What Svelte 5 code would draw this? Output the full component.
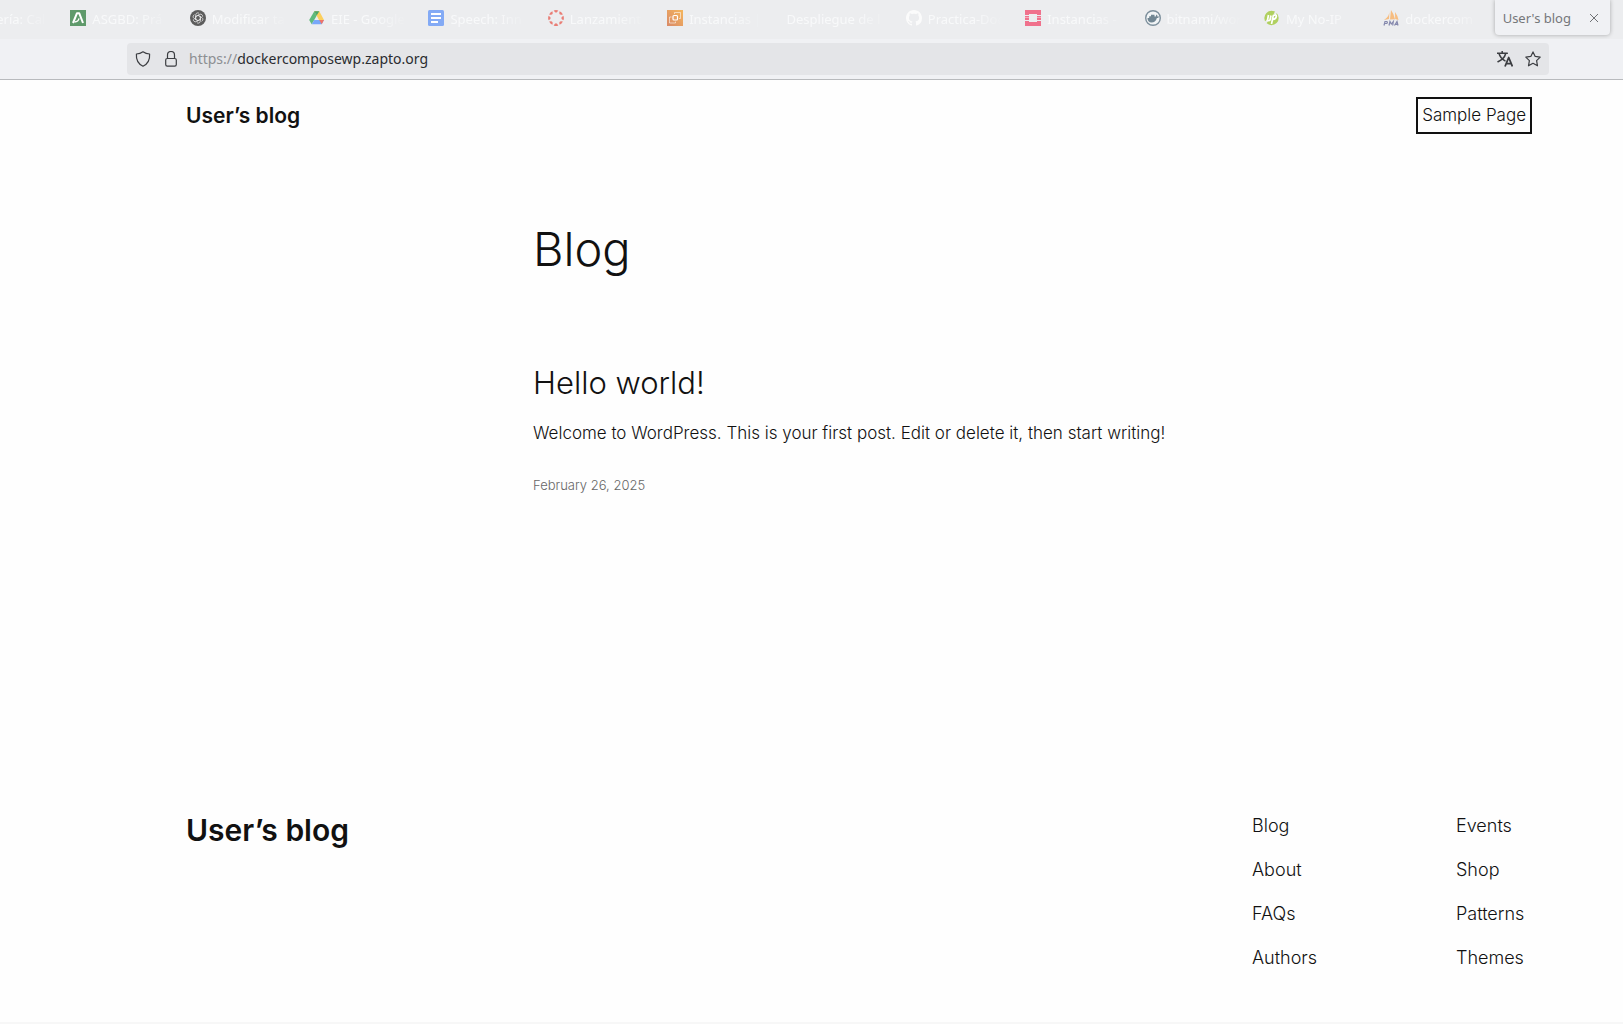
<script lang="ts">
  const tabs = [
    { icon: '', title: 'Librería: Cal' },
    { icon: 'andalucia', title: 'ASGBD: Prá' },
    { icon: 'gpt', title: 'Modificar ta' },
    { icon: 'drive', title: 'EIE - Google' },
    { icon: 'docs', title: 'Speech: Inn' },
    { icon: 'canvas', title: 'Lanzamient' },
    { icon: 'ec2', title: 'Instancias |' },
    { icon: 'none', title: 'Despliegue de l' },
    { icon: 'github', title: 'Practica-Doc' },
    { icon: 'openstack', title: 'Instancias -' },
    { icon: 'docker', title: 'bitnami/wor' },
    { icon: 'noip', title: 'My No-IP' },
    { icon: 'pma', title: 'dockercom' },
  ];

  const footerLinks = ['Blog', 'Events', 'About', 'Shop', 'FAQs', 'Patterns', 'Authors', 'Themes'];
  const ring = Array.from({ length: 8 }, (_, i) => i * 45);
  let address = $state('dockercomposewp.zapto.org');
</script>

<div class="window">
  <div class="tabstrip" role="tablist" aria-label="Tabs">
    {#each tabs as tab}
      <button class="tab" role="tab" aria-selected="false">
        {#if tab.icon !== 'none'}
          <svg class="favicon" viewBox="0 0 16 16" aria-hidden="true">
            {#if tab.icon === 'andalucia'}
              <rect width="16" height="16" fill="#5f9a6b" />
              <path d="M3 13 7 3.2h2.2L13 13" fill="none" stroke="#fff" stroke-width="2" stroke-linejoin="round" />
              <path d="M4.500 12C7 11.800 8.600 10.500 9 8.300" fill="none" stroke="#fff" stroke-width="1.300" />
            {:else if tab.icon === 'gpt'}
              <circle cx="8" cy="8" r="8" fill="#5d5d5d" />
              <g fill="none" stroke="#e4e4e4" stroke-width="0.8">
                {#each [0, 60, 120, 180, 240, 300] as angle}
                  <path d="M5.700 7V4.800a2.100 2.100 0 0 1 3.400-1.500M5.700 6.600 8 5.300l2.800 1.600" transform="rotate({angle} 8 8)" />
                {/each}
              </g>
            {:else if tab.icon === 'drive'}
              <path d="M5.300 1.200h5L5.200 10 2.700 14.200 0.200 10z" fill="#5fba7d" />
              <path d="M5.300 1.200h5L15 10h-5z" fill="#fccf5c" />
              <path d="M5.300 1.200h5L7.700 5.400z" fill="#4ba56b" />
              <path d="M5.200 10H15l-2.300 4.200h-10z" fill="#78a7f8" />
              <path d="M10.200 10H15l-2.300 4.200z" fill="#ef7468" />
            {:else if tab.icon === 'docs'}
              <rect width="16" height="16" rx="1.500" fill="#83aaf5" />
              <path d="M3 4h10M3 8h10M3 12h7" stroke="#fff" stroke-width="2" />
            {:else if tab.icon === 'canvas'}
              {#each ring as angle}
                <path d="M5.700 .6Q8-.4 10.300 .6 8 4.800 5.700 .6z" fill="#e97e76" transform="rotate({angle} 8 8)" />
              {/each}
            {:else if tab.icon === 'ec2'}
              <defs>
                <linearGradient id="orange" x1="0" y1="1" x2="1" y2="0">
                  <stop offset="0" stop-color="#d98a68" />
                  <stop offset="1" stop-color="#f5b65c" />
                </linearGradient>
              </defs>
              <rect width="16" height="16" fill="url(#orange)" />
              <g fill="none" stroke="#fff">
                <rect x="6" y="5.500" width="4.500" height="4.500" rx="1" stroke-width="1.200" />
                <path d="M7.500 4V2.500h6v6H12M4.500 7h-2v6h6v-1.500" stroke-width="0.800" opacity="0.700" />
              </g>
            {:else if tab.icon === 'github'}
              <path fill="#fbfbfb" d="M8 0C3.580 0 0 3.580 0 8c0 3.540 2.290 6.530 5.470 7.590.4.070.55-.17.55-.38 0-.19-.01-.82-.01-1.490-2.010.37-2.530-.49-2.690-.94-.09-.23-.48-.94-.82-1.130-.28-.15-.68-.52-.01-.53.63-.01 1.080.58 1.230.82.72 1.210 1.870.87 2.330.66.07-.52.28-.87.51-1.070-1.780-.2-3.640-.89-3.640-3.950 0-.87.31-1.590.82-2.150-.08-.2-.36-1.020.08-2.120 0 0 .67-.21 2.200.82.64-.18 1.320-.27 2-.27s1.360.09 2 .27c1.530-1.040 2.200-.82 2.200-.82.44 1.100.16 1.920.08 2.120.51.56.82 1.270.82 2.150 0 3.070-1.870 3.750-3.650 3.950.29.25.54.73.54 1.480 0 1.070-.01 1.930-.01 2.200 0 .21.15.46.55.38A8.010 8.010 0 0 0 16 8c0-4.420-3.580-8-8-8z" />
            {:else if tab.icon === 'openstack'}
              <path d="M0 0h16v5h-4V4H4v1H0zM0 6h4v4H0zM12 6h4v4h-4zM0 11h4v1h8v-1h4v5H0z" fill="#f0718c" />
              <path d="M0 7.500h4M12 7.500h4" stroke="#f6aabb" />
            {:else if tab.icon === 'docker'}
              <circle cx="8" cy="8" r="7.300" fill="#f1f4f6" stroke="#7c8f9c" stroke-width="1.400" />
              <path d="M2.500 8h1.700V6.300H6V4.800h3.500v1.700h1.300c.1-.8.400-1.400.900-1.900.600.500.800 1.200.700 1.900.500-.2 1.200-.1 1.700.2-.4.900-1.200 1.200-2.200 1.200C11 11 9 12.500 6.500 12.500c-2.500 0-4-1.700-4-4.500z" fill="#718693" />
            {:else if tab.icon === 'noip'}
              <circle cx="7.500" cy="8" r="7.200" fill="#b0d05f" />
              <path d="M0 14 3.500 10.500M10.500 4 14.500 0" fill="none" stroke="#ecedef" stroke-width="2.200" />
              <path d="M4.500 5 3.500 10q1.200 1.500 2.500 0L7 5.500M7.500 14 9.300 5.500q3.500-1.500 3 1T9 9.500" fill="none" stroke="#fff" stroke-width="1.700" />
            {:else if tab.icon === 'pma'}
              <path d="M6.500 1Q6.800 6 1 10l5-1zM8 0 7 9.500l5-.3Q11 4 8 0zM12 2l.2 7 3.300 1Q15 6 12 2z" fill="#f7bd80" />
              <path d="M1 15.500 2 11.500h1.700q1.500 1.200-.2 2H1.800M6 15.500 7 11.500l1.300 2.500 2-2.500-.6 4M11.500 15.500l2.500-4 1 4M12.500 14.300h2.300" fill="none" stroke="#8588ad" stroke-width="1.200" />
            {/if}
          </svg>
        {/if}
        <span class="title">{tab.title}</span>
      </button>
    {/each}
    <div class="slot">
      <div class="current">
        <button class="label" role="tab" aria-selected="true">User's blog</button>
        <button class="close" aria-label="Close tab">
          <svg viewBox="0 0 10 10"><path d="M1 1 9 9M9 1 1 9" /></svg>
        </button>
      </div>
    </div>
  </div>

  <div class="toolbar">
    <div class="urlbar">
      <div class="tools">
        <button class="tool" aria-label="Tracking protection">
          <svg viewBox="0 0 16 16"><path d="M8 .8C6 2.200 3.800 2.900 1.400 3 1 8.500 3.300 13 8 15.200 12.700 13 15 8.500 14.600 3 12.200 2.900 10 2.200 8 .8z" /></svg>
        </button>
        <button class="tool" aria-label="Connection secure">
          <svg viewBox="0 0 16 16"><path d="M4.500 7V4a3.500 3.500 0 0 1 7 0v3" /><rect x="2.700" y="7.500" width="10.600" height="7.600" rx="1.600" /></svg>
        </button>
      </div>
      <div class="address">
        <label for="address">https://</label>
        <input id="address" bind:value={address} spellcheck="false" />
      </div>
      <div class="tools">
        <button class="tool" aria-label="Translate page">
          <svg viewBox="0 0 16 16"><path d="M.3 2.200h10M5.200 0v2M2 2.500C3 6 5.500 8.500 8 9.800M8.700 2.500C7.800 6 5 9 1 10.700" class="medium" /><path d="M8 15.500 11.700 6.500 15.400 15.500M9.300 12.700h4.900" class="heavy" /></svg>
        </button>
        <button class="tool" aria-label="Bookmark this page">
          <svg viewBox="0 0 16 16"><path d="M8 .9 10.200 5.400 15.200 6.100 11.600 9.600 12.500 14.800 8 12.300 3.500 14.800 4.400 9.600 .8 6.100 5.800 5.400z" /></svg>
        </button>
      </div>
    </div>
  </div>

  <div class="page">
    <header>
      <a class="brand" href="#home">User’s blog</a>
      <nav><a class="focused" href="#sample">Sample Page</a></nav>
    </header>
    <main>
      <h1>Blog</h1>
      <article>
        <h2><a href="#hello">Hello world!</a></h2>
        <p>Welcome to WordPress. This is your first post. Edit or delete it, then start writing!</p>
        <a class="date" href="#hello"><time datetime="2025-02-26">February 26, 2025</time></a>
      </article>
    </main>
    <footer>
      <a class="brand large" href="#home">User’s blog</a>
      <nav class="links">
        {#each footerLinks as link}
          <a href="#{link.toLowerCase()}">{link}</a>
        {/each}
      </nav>
    </footer>
  </div>
  <div class="edge"></div>
</div>

<style>
  :global(body) { background: #fff; }
  .window { display: flex; flex-direction: column; min-height: 100vh; overflow: hidden; font-family: 'Noto Sans', sans-serif; }
  button { border: 0; padding: 0; background: none; font: inherit; color: inherit; }
  a { color: inherit; text-decoration: none; }

  .tabstrip { display: grid; grid-template-columns: repeat(14, minmax(0, 1fr)); height: 39px; padding-right: 11px; margin-left: -59px; background: #ecedef; font-size: 13px; }
  .tab { display: flex; align-items: center; gap: 6px; min-width: 0; padding: 0 6px 4px 10px; color: #f8f9fa; text-align: left; }
  .favicon { flex: none; width: 16px; height: 16px; }
  .title { flex: 1; min-width: 0; overflow: hidden; white-space: nowrap; line-height: 18px; padding-top: 2px; mask-image: linear-gradient(to left, transparent 4px, #000 36px); }
  .slot { padding: 0 2px; }
  .current { display: flex; align-items: center; justify-content: space-between; height: 35px; box-sizing: border-box; padding: 0 10px 0 8px; border-radius: 0 0 4px 4px; background: #f0f1f4; box-shadow: 0 0 4px rgb(0 0 0 / 30%); color: #75777a; }
  .label { white-space: nowrap; }
  .close { display: flex; padding: 1px; }
  .close svg { width: 10px; height: 10px; stroke: #707275; fill: none; }

  .toolbar { box-sizing: border-box; height: 41px; padding: 4px 74px 4px 127px; background: #f0f1f4; border-bottom: 1px solid #b8babd; }
  .urlbar { display: flex; align-items: center; gap: 10px; height: 32px; padding: 0 8px; border-radius: 4px; background: #e4e5e8; font-size: 14px; color: #2a2c30; }
  .tools { display: flex; gap: 12px; }
  .tool { display: flex; }
  .tool svg { width: 16px; height: 16px; fill: none; stroke: #3b3d41; stroke-width: 1.2; stroke-linejoin: round; stroke-linecap: round; }
  .tool .medium { stroke-width: 1.5; }
  .tool .heavy { stroke-width: 1.8; stroke-linecap: butt; }
  .address { display: flex; align-items: center; flex: 1; min-width: 0; padding-bottom: 2px; }
  .address label { color: #8d8f93; }
  input { flex: 1; min-width: 0; padding: 0; border: 0; outline: 0; background: none; font: inherit; color: inherit; }

  .page { flex: 1; display: flex; flex-direction: column; padding: 0 97px 0 186px; background: #fefefe; color: #111; font-family: Inter, sans-serif; font-size: 17px; font-weight: 300; line-height: 25px; }
  header { display: flex; align-items: center; justify-content: space-between; padding: 20px 0; }
  .brand { font-size: 21px; line-height: 31px; font-weight: 600; }
  .focused { display: block; outline: 2px solid #111; outline-offset: 4px; }
  main { width: 100%; max-width: 646px; margin: 0 auto; padding-top: 70px; }
  h1, h2, p { margin: 0; font-weight: 300; }
  h1 { font-size: 47px; line-height: 56px; }
  article { display: flex; flex-direction: column; padding-top: 88px; }
  h2 { font-size: 31px; line-height: 36px; }
  p { margin-top: 20px; }
  .date { margin-top: 29px; font-size: 13px; line-height: 20px; color: #666; }
  footer { display: flex; justify-content: space-between; align-items: flex-start; margin-top: auto; padding-bottom: 52px; }
  .large { font-size: 30px; line-height: 35px; }
  .links { display: grid; grid-template-columns: 204px 70px; row-gap: 19px; font-size: 18px; }
  .edge { height: 2px; background: #f7f7f7; }
</style>
